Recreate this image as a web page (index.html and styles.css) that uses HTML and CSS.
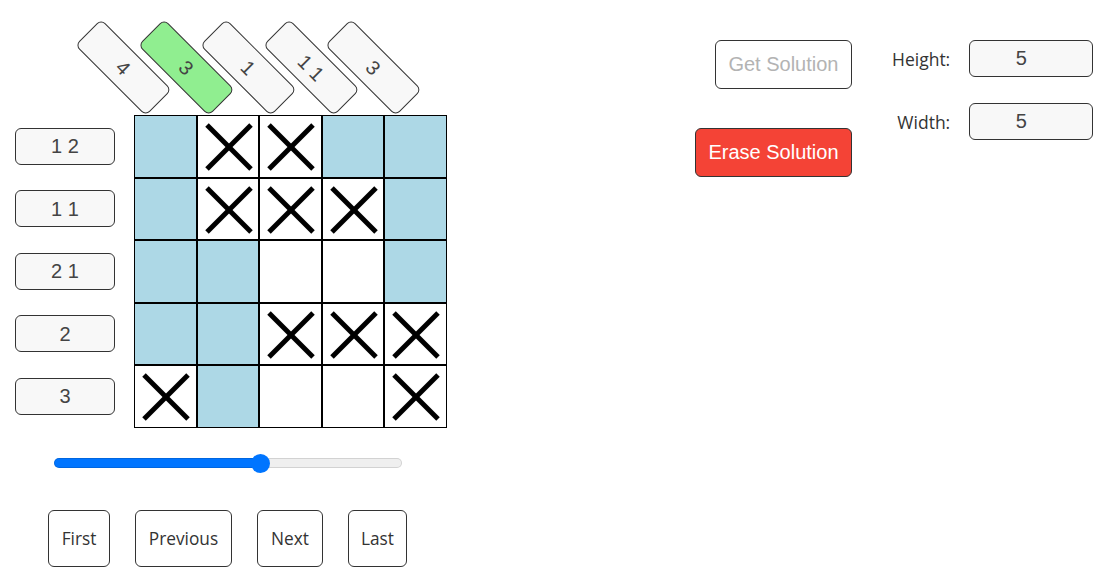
FILE: index.html
```html
<!DOCTYPE html>
<html lang="en">
<head>
<meta charset="utf-8">
<title>Nonogram</title>
<link rel="stylesheet" href="styles.css">
</head>
<body>
<div class="app">
  <div class="puzzle">
    <div class="colclues">
      <div class="slot"><button class="clue col">4</button></div>
      <div class="slot"><button class="clue col done">3</button></div>
      <div class="slot"><button class="clue col">1</button></div>
      <div class="slot"><button class="clue col">1 1</button></div>
      <div class="slot"><button class="clue col">3</button></div>
    </div>
    <div class="row">
      <button class="clue">1 2</button>
      <div class="cell fill"></div>
      <div class="cell"><svg class="x" viewBox="0 0 60 60"><line x1="9" y1="9" x2="53" y2="53"/><line x1="53" y1="9" x2="9" y2="53"/></svg></div>
      <div class="cell"><svg class="x" viewBox="0 0 60 60"><line x1="9" y1="9" x2="53" y2="53"/><line x1="53" y1="9" x2="9" y2="53"/></svg></div>
      <div class="cell fill"></div>
      <div class="cell fill"></div>
    </div>
    <div class="row">
      <button class="clue">1 1</button>
      <div class="cell fill"></div>
      <div class="cell"><svg class="x" viewBox="0 0 60 60"><line x1="9" y1="9" x2="53" y2="53"/><line x1="53" y1="9" x2="9" y2="53"/></svg></div>
      <div class="cell"><svg class="x" viewBox="0 0 60 60"><line x1="9" y1="9" x2="53" y2="53"/><line x1="53" y1="9" x2="9" y2="53"/></svg></div>
      <div class="cell"><svg class="x" viewBox="0 0 60 60"><line x1="9" y1="9" x2="53" y2="53"/><line x1="53" y1="9" x2="9" y2="53"/></svg></div>
      <div class="cell fill"></div>
    </div>
    <div class="row">
      <button class="clue">2 1</button>
      <div class="cell fill"></div>
      <div class="cell fill"></div>
      <div class="cell"></div>
      <div class="cell"></div>
      <div class="cell fill"></div>
    </div>
    <div class="row">
      <button class="clue">2</button>
      <div class="cell fill"></div>
      <div class="cell fill"></div>
      <div class="cell"><svg class="x" viewBox="0 0 60 60"><line x1="9" y1="9" x2="53" y2="53"/><line x1="53" y1="9" x2="9" y2="53"/></svg></div>
      <div class="cell"><svg class="x" viewBox="0 0 60 60"><line x1="9" y1="9" x2="53" y2="53"/><line x1="53" y1="9" x2="9" y2="53"/></svg></div>
      <div class="cell"><svg class="x" viewBox="0 0 60 60"><line x1="9" y1="9" x2="53" y2="53"/><line x1="53" y1="9" x2="9" y2="53"/></svg></div>
    </div>
    <div class="row">
      <button class="clue">3</button>
      <div class="cell"><svg class="x" viewBox="0 0 60 60"><line x1="9" y1="9" x2="53" y2="53"/><line x1="53" y1="9" x2="9" y2="53"/></svg></div>
      <div class="cell fill"></div>
      <div class="cell"></div>
      <div class="cell"></div>
      <div class="cell"><svg class="x" viewBox="0 0 60 60"><line x1="9" y1="9" x2="53" y2="53"/><line x1="53" y1="9" x2="9" y2="53"/></svg></div>
    </div>
    <div class="slider-row">
      <input class="slider" type="range" min="0" max="5" value="3" style="--fill:59.5%">
    </div>
    <div class="nav">
      <button class="navbtn nav-first">First</button>
      <button class="navbtn nav-prev">Previous</button>
      <button class="navbtn nav-next">Next</button>
      <button class="navbtn nav-last">Last</button>
    </div>
  </div>
  <div class="controls">
    <div class="actions">
      <button class="action" disabled>Get Solution</button>
      <button class="action erase">Erase Solution</button>
    </div>
    <div class="dims">
      <label class="dim-label" for="h">Height:</label>
      <input class="dim-input" id="h" type="text" value="5">
      <label class="dim-label" for="w">Width:</label>
      <input class="dim-input" id="w" type="text" value="5">
    </div>
  </div>
</div>
</body>
</html>
```

FILE: styles.css
```css
* { box-sizing: border-box; }

body {
  margin: 0;
  background: #fff;
  font-family: "Open Sans", "Noto Sans", sans-serif;
  color: #333;
}

.app {
  display: flex;
  align-items: flex-start;
}

.puzzle {
  flex: 0 0 695px;
  padding-left: 15px;
}

.colclues {
  display: flex;
  height: 115px;
  padding-left: 119px;
}

.slot {
  width: 62.5px;
  height: 115px;
  display: flex;
  align-items: center;
  justify-content: center;
}

.clue {
  flex: 0 0 auto;
  width: 100px;
  height: 37px;
  margin: 0;
  padding: 0;
  border: 1px solid #333;
  border-radius: 6px;
  background: #f8f8f8;
  color: #444;
  font-family: "Liberation Sans", Arial, sans-serif;
  font-size: 20px;
  line-height: 1;
}

.clue.col {
  transform: translate(-41.6px, 10px) rotate(45deg);
}

.clue.done {
  background: #90ee90;
}

.row {
  display: flex;
  align-items: center;
  height: 62.5px;
}

.row .clue {
  margin-right: 19px;
}

.cell {
  flex: 0 0 auto;
  width: 62.5px;
  height: 62.5px;
  border: 1px solid #000;
  background: #fff;
}

.cell.fill {
  background: #add8e6;
}

.x {
  display: block;
  width: 60px;
  height: 60px;
  stroke: #000;
  stroke-width: 5;
}

.slider-row {
  padding-left: 39px;
  margin-top: 25.5px;
  height: 20px;
}

.slider {
  -webkit-appearance: none;
  appearance: none;
  display: block;
  width: 348px;
  height: 20px;
  margin: 0;
  background: transparent;
}

.slider::-webkit-slider-runnable-track {
  height: 10px;
  border-radius: 5px;
  background: linear-gradient(to right, #0075ff 0 var(--fill), #efefef var(--fill));
  box-shadow: inset 0 0 0 1px rgba(0, 0, 0, 0.12);
}

.slider::-webkit-slider-thumb {
  -webkit-appearance: none;
  appearance: none;
  width: 19px;
  height: 19px;
  margin-top: -4.5px;
  border: none;
  border-radius: 50%;
  background: #0075ff;
}

.nav {
  display: flex;
  gap: 25px;
  margin-top: 37px;
  padding-left: 33px;
}

.navbtn {
  height: 57px;
  margin: 0;
  padding: 0;
  border: 1px solid #333;
  border-radius: 6px;
  background: #fff;
  color: #333;
  font-family: "Open Sans", "Noto Sans", sans-serif;
  font-size: 17.3px;
  text-align: center;
}

.nav-first { width: 62px; }
.nav-prev { width: 97px; }
.nav-next { width: 66px; }
.nav-last { width: 59px; }

.controls {
  display: flex;
  align-items: flex-start;
  gap: 40px;
  padding-top: 40px;
}

.actions {
  width: 157px;
  display: flex;
  flex-direction: column;
  align-items: flex-end;
  gap: 39px;
}

.action {
  height: 49px;
  margin: 0;
  padding: 0 12.5px;
  border: 1px solid #333;
  border-radius: 6px;
  background: #fff;
  color: #b3b3b3;
  font-family: "Liberation Sans", Arial, sans-serif;
  font-size: 20px;
  white-space: nowrap;
}

.action.erase {
  background: #f44336;
  color: #fff;
}

.dims {
  display: grid;
  grid-template-columns: auto 124px;
  grid-auto-rows: 37px;
  column-gap: 19px;
  row-gap: 26px;
  align-items: center;
}

.dim-label {
  text-align: right;
  font-size: 17.5px;
  color: #333;
}

.dim-input {
  width: 124px;
  height: 37px;
  margin: 0;
  padding: 0 20px 0 0;
  border: 1px solid #333;
  border-radius: 6px;
  background: #f8f8f8;
  color: #444;
  font-family: "Liberation Sans", Arial, sans-serif;
  font-size: 20px;
  text-align: center;
}
```
